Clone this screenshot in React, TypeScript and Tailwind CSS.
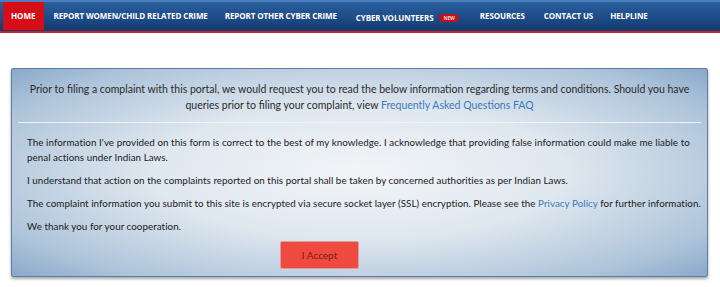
import React from "react";

export default function App() {
  return (
    <div className="w-[720px] h-[287px] bg-white overflow-hidden" style={{ fontFamily: "Lato, 'Open Sans', sans-serif" }}>
      <div className="h-[33px] bg-gradient-to-b from-[#2a5f9e] via-[#1e4d8a] to-[#153a6e] border-t-2 border-[#4d7fbf] flex items-stretch pl-[3px] pr-2 border-b-2 border-b-[#c8202a]">
        <div className="flex items-center bg-[#d40f17] px-[8px] mb-[1px] text-white text-[8px] font-bold" style={{ fontFamily: "'Open Sans', sans-serif" }}>
          HOME
        </div>
        <div className="flex items-center text-white text-[8px] font-bold tracking-[-0.1px] pb-[2px]" style={{ fontFamily: "'Open Sans', sans-serif" }}>
          <span className="ml-[10px]">REPORT WOMEN/CHILD RELATED CRIME</span>
          <span className="ml-[17px]">REPORT OTHER CYBER CRIME</span>
          <span className="ml-[19px] mt-[4px]">CYBER VOLUNTEERS</span>
          <span className="ml-[6px] mt-[4px] bg-[#b8141a] rounded-full px-[4px] text-[5px] leading-[8px] text-[#ffd0d0]">NEW</span>
          <span className="ml-[21px]">RESOURCES</span>
          <span className="ml-[19px]">CONTACT US</span>
          <span className="ml-[17px]">HELPLINE</span>
        </div>
      </div>
      <div className="mt-[35px] ml-[11px] w-[697px] h-[209px] border border-[#5b7ea6] rounded-[2px] shadow-[0_2px_3px_rgba(0,0,0,0.35)]"
        style={{ background: "radial-gradient(ellipse 75% 80% at 50% 50%, #f2f5f8 0%, #dfe7ef 40%, #aec4da 75%, #769ac0 100%)" }}>
        <div className="pt-[12px] px-[14px] text-center text-[10.5px] leading-[16px] text-[#2b2b2b]">
          Prior to filing a complaint with this portal, we would request you to read the below information regarding terms and conditions. Should you have queries prior to filing your complaint, view <span className="text-[#3a7ab8]">Frequently Asked Questions FAQ</span>
        </div>
        <div className="mx-[6px] mt-[9px] h-px bg-[#eef3f8]" />
        <div className="pl-[15px] pr-0 pt-[12px] text-[9.8px] tracking-[0.05px] leading-[15px] text-[#1a1a1a]">
          <p>The information I've provided on this form is correct to the best of my knowledge. I acknowledge that providing false information could make me liable to<br />penal actions under Indian Laws.</p>
          <p className="mt-[8px]">I understand that action on the complaints reported on this portal shall be taken by concerned authorities as per Indian Laws.</p>
          <p className="mt-[8px] whitespace-nowrap">The complaint information you submit to this site is encrypted via secure socket layer (SSL) encryption. Please see the <span className="text-[#3a7ab8]">Privacy Policy</span> for further information.</p>
          <p className="mt-[8px]">We thank you for your cooperation.</p>
        </div>
        <div className="ml-[268px] mt-[7px] w-[79px] h-[28px] bg-[#ef4a3f] border border-[#d8a0a0] rounded-[2px] flex items-center justify-center text-[10px] text-[#7a1a12]">
          I Accept
        </div>
      </div>
    </div>
  );
}
